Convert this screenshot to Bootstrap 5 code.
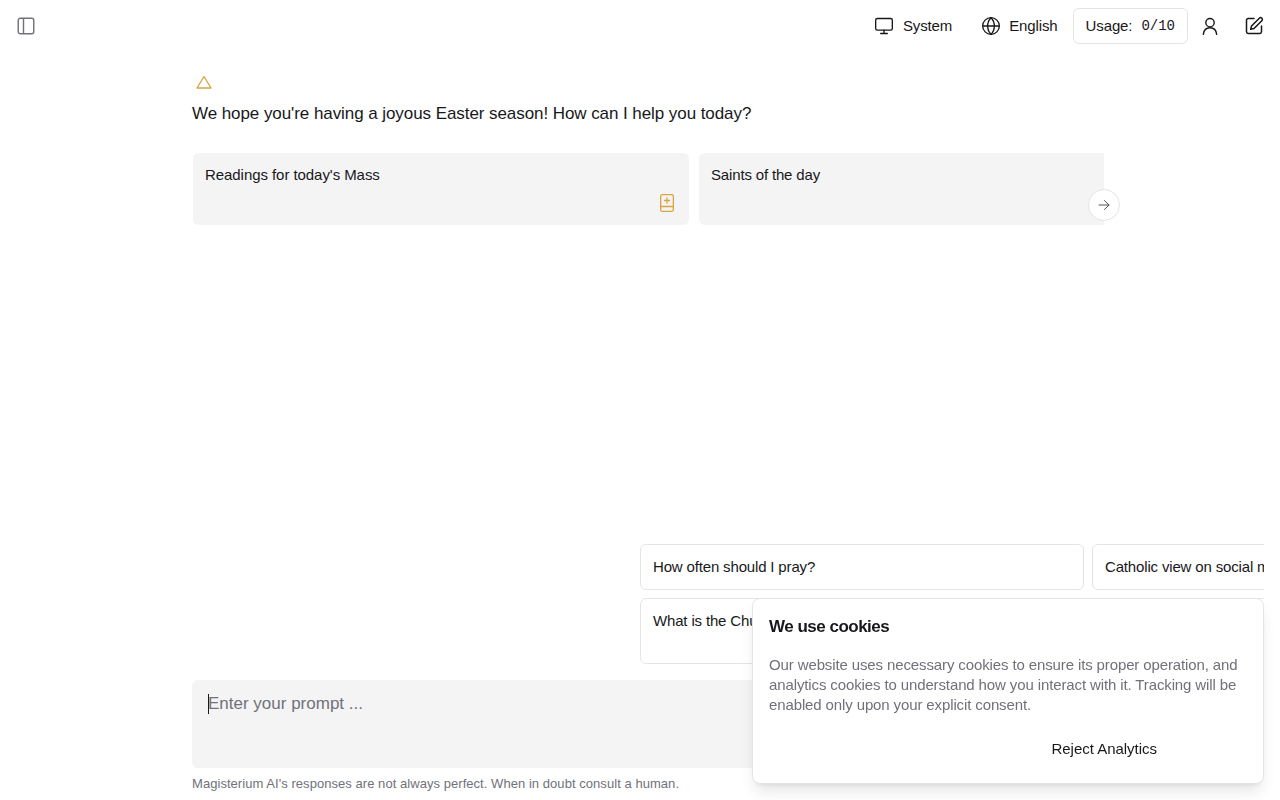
<!DOCTYPE html>
<html lang="en">
<head>
<meta charset="utf-8">
<title>Magisterium AI</title>
<link href="https://cdn.jsdelivr.net/npm/bootstrap@5.3.0/dist/css/bootstrap.min.css" rel="stylesheet">
<style>
html,body{height:100%;overflow:hidden}
body{font-family:"Liberation Sans",Arial,sans-serif;color:#18181b;background:#fff;font-size:15px}
.shell{height:800px}
.topbar{height:52px;padding:0 16px}
.ibtn{color:#18181b;line-height:1;display:flex;align-items:center}
.navtext{font-size:15px;letter-spacing:-.12px}
.navitem{gap:9px}
.navitem.lang{gap:8px;margin-right:15px}
.navitem.sys{margin-right:29px}
.usagebox{border:1px solid #e4e4e7;border-radius:6px;height:36px;padding:0 12px;font-size:15px;gap:9px}
.usagebox span{letter-spacing:-.12px}
.usagebox code{font-family:"Liberation Mono",monospace;font-size:14px;color:#18181b}
.ico-user{margin-left:12px}
.ico-edit{margin-left:24px}
.ico-warn{margin-left:4px}
.welcome{padding:22px 0 0 192px;width:1104px}
.greet{font-size:17px;letter-spacing:-.07px;margin:10px 0 0;line-height:28px}
.hero-strip{position:relative;margin-top:25px}
.hero-clip{overflow:hidden;padding-left:1px;gap:10px;width:912px}
.hero-tile{flex:0 0 496px;height:72px;background:#f4f4f5;border-radius:6px;padding:12px;font-size:15px;letter-spacing:-.06px;line-height:20px;position:relative}
.hero-tile.tight{letter-spacing:-.16px}
.tile-ico{position:absolute;right:15px;bottom:13px;line-height:0}
.next-btn{position:absolute;left:896px;top:36px;width:32px;height:32px;border-radius:50%;background:#fff;border:1px solid #e4e4e7;padding:0;display:flex;align-items:center;justify-content:center}
.spacer{flex:1 1 auto}
.sugg-clip{width:624px;margin-left:640px;overflow:hidden}
.sugg-grid{display:grid;grid-template-columns:444px 444px;grid-template-rows:46px 66px;gap:8px}
.sugg-tile{border:1px solid #e4e4e7;border-radius:6px;padding:12px;font-size:15px;letter-spacing:-.16px;line-height:20px;white-space:nowrap;overflow:hidden}
.prompt{margin:16px 0 0 192px;width:1072px;height:88px;background:#f4f4f5;border-radius:6px;padding:12px 16px;font-size:17px;line-height:24px;color:#71717a}
.caret{display:inline-block;width:1px;height:20px;background:#18181b;vertical-align:-5px;margin-right:-1px}
.disclaimer{margin:6px 0 0 192px;font-size:13px;letter-spacing:.05px;line-height:20px;color:#71717a;height:26px}
.cookie-card{position:fixed;left:752px;top:598px;width:512px;height:186px;background:#fff;border:1px solid #e4e4e7;border-radius:8px;box-shadow:0 10px 15px -3px rgba(0,0,0,.1),0 4px 6px -4px rgba(0,0,0,.1);padding:16px}
.cookie-title{font-size:17px;font-weight:600;line-height:24px;letter-spacing:-.5px;margin:0}
.cookie-body{font-size:15px;letter-spacing:-.12px;line-height:20px;color:#71717a;margin:16px 0 0}
.cookie-act{margin:24px 0 0;padding-right:90px;font-size:15px;letter-spacing:-.02px;line-height:20px}
</style>
</head>
<body>
<div class="shell d-flex flex-column">
  <header class="topbar d-flex align-items-center">
    <span class="ibtn"><svg width="20" height="20" viewBox="0 0 24 24" fill="none" stroke="#71717a" stroke-width="1.7"><rect x="2.700" y="2.700" width="18.600" height="18.600" rx="2.500"/><path d="M9 3v18"/></svg></span>
    <div class="ms-auto d-flex align-items-center">
      <div class="d-flex align-items-center navitem sys navtext">
        <svg width="20" height="20" viewBox="0 0 24 24" fill="none" stroke="#18181b" stroke-width="1.6" stroke-linecap="round" stroke-linejoin="round"><rect x="2" y="3" width="20" height="14" rx="2"/><path d="M8 21h8M12 17v4"/></svg><span>System</span>
      </div>
      <div class="d-flex align-items-center navitem lang navtext">
        <svg width="20" height="20" viewBox="0 0 24 24" fill="none" stroke="#18181b" stroke-width="1.6"><circle cx="12" cy="12" r="10"/><path d="M2 12h20M12 2c3 3 4 6.500 4 10s-1 7-4 10c-3-3-4-6.500-4-10s1-7 4-10z"/></svg><span>English</span>
      </div>
      <div class="usagebox d-flex align-items-center"><span>Usage:</span><code>0/10</code></div>
      <span class="ibtn ico-user"><svg width="20" height="20" viewBox="0 0 24 24" fill="none" stroke="#18181b" stroke-width="1.7" stroke-linecap="round"><circle cx="12" cy="8" r="5"/><path d="M4 22c.5-5 3.500-8 8-8s7.500 3 8 8"/></svg></span>
      <span class="ibtn ico-edit"><svg width="20" height="20" viewBox="0 0 24 24" fill="none" stroke="#18181b" stroke-width="1.8" stroke-linecap="round" stroke-linejoin="round"><path d="M12 3H5a2 2 0 0 0-2 2v14a2 2 0 0 0 2 2h14a2 2 0 0 0 2-2v-7"/><path d="M18.400 2.600a2.100 2.100 0 0 1 3 3L12 15l-4 1 1-4z"/></svg></span>
    </div>
  </header>
  <section class="welcome">
    <svg class="d-block ico-warn" width="16" height="16" viewBox="0 0 16 16" fill="none" stroke="#d9a441" stroke-width="1.300" stroke-linejoin="round"><path d="M8 2.500 15 14H1z"/></svg>
    <p class="greet">We hope you're having a joyous Easter season! How can I help you today?</p>
    <div class="hero-strip">
      <div class="hero-clip d-flex">
        <div class="hero-tile">Readings for today's Mass
          <span class="tile-ico"><svg width="14" height="18" viewBox="0 0 14 18" fill="none" stroke="#d9a441" stroke-width="1.300"><rect x=".65" y=".65" width="12.700" height="16.700" rx="1.500"/><path d="M.65 12.500h12.700M7 3.500v6M4 6.500h6"/></svg></span>
        </div>
        <div class="hero-tile tight">Saints of the day</div>
      </div>
      <button class="next-btn" type="button" aria-label="Next"><svg width="12" height="12" viewBox="0 0 24 24" fill="none" stroke="#52525b" stroke-width="2" stroke-linecap="round" stroke-linejoin="round"><path d="M2 12h20M13 3l9 9-9 9"/></svg></button>
    </div>
  </section>
  <div class="spacer"></div>
  <div class="sugg-clip">
    <div class="sugg-grid">
      <div class="sugg-tile">How often should I pray?</div>
      <div class="sugg-tile">Catholic view on social media</div>
      <div class="sugg-tile">What is the Church's teaching on grace?</div>
      <div class="sugg-tile">Who are the Doctors of the Church?</div>
    </div>
  </div>
  <div class="prompt"><span class="caret"></span>Enter your prompt ...</div>
  <div class="disclaimer">Magisterium AI's responses are not always perfect. When in doubt consult a human.</div>
</div>
<aside class="cookie-card">
  <h2 class="cookie-title">We use cookies</h2>
  <p class="cookie-body">Our website uses necessary cookies to ensure its proper operation, and analytics cookies to understand how you interact with it. Tracking will be enabled only upon your explicit consent.</p>
  <p class="cookie-act text-end">Reject Analytics</p>
</aside>
<script src="https://cdn.jsdelivr.net/npm/bootstrap@5.3.0/dist/js/bootstrap.bundle.min.js"></script>
</body>
</html>
